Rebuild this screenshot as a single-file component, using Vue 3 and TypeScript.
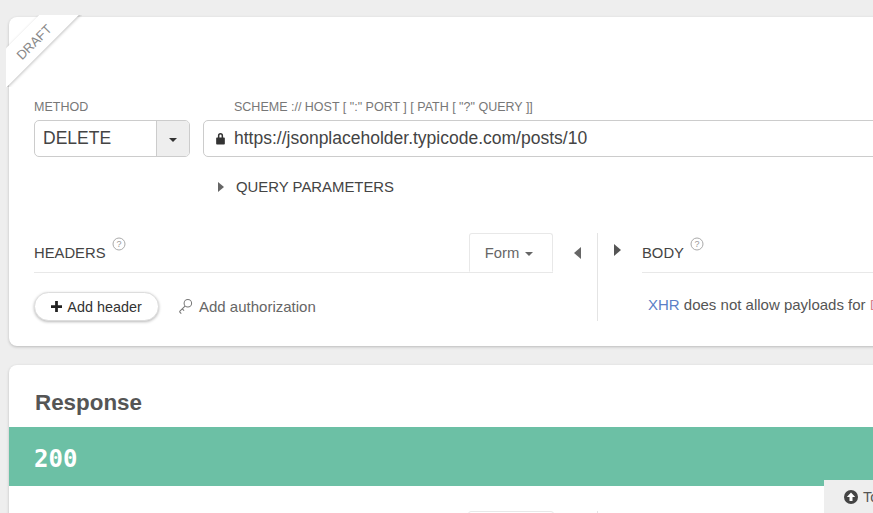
<script setup lang="ts">
const method = 'DELETE'
const url = 'https://jsonplaceholder.typicode.com/posts/10'
</script>

<template>
  <div class="page">
    <section class="card request">
      <div class="ribbon"><span>DRAFT</span></div>
      <div class="url-row">
        <div class="method">
          <label>METHOD</label>
          <div class="select">
            <span class="select-value">{{ method }}</span>
            <span class="select-btn"><i class="caret"></i></span>
          </div>
        </div>
        <div class="address">
          <label>SCHEME :// HOST [ ":" PORT ] [ PATH [ "?" QUERY ]]</label>
          <div class="url-input">
            <svg class="lock" viewBox="0 0 10 12" width="11" height="13"><path fill="#333" d="M2.600 5V3.400a2.400 2.400 0 0 1 4.800 0V5h.9c.4 0 .7.3.7.7v5.100c0 .4-.3.7-.7.7H1.700c-.4 0-.7-.3-.7-.7V5.700c0-.4.3-.7.7-.7zm1.400 0h2V3.400a1 1 0 0 0-2 0z"/></svg>
            <span>{{ url }}</span>
          </div>
        </div>
      </div>
      <div class="query"><i class="tri right"></i><span>QUERY PARAMETERS</span></div>
      <div class="panes">
        <div class="pane headers">
          <div class="pane-head">
            <span class="title">HEADERS</span>
            <svg class="help" viewBox="0 0 14 14" width="14" height="14"><circle cx="7" cy="7" r="6" fill="none" stroke="#aaa"/><text x="7" y="10.200" text-anchor="middle" font-size="9" font-family="Liberation Sans" fill="#999">?</text></svg>
            <div class="tab">Form<i class="caret grey"></i></div>
          </div>
          <div class="actions">
            <button class="add">
              <svg viewBox="0 0 12 12" width="11" height="11"><path fill="#222" d="M4.500 0h3v4.500H12v3H7.500V12h-3V7.500H0v-3h4.500z"/></svg>
              Add header
            </button>
            <span class="auth">
              <svg viewBox="0 0 16 18" width="15" height="17"><g fill="none" stroke="#777" stroke-width="1.100"><circle cx="10.500" cy="5.500" r="4"/><path d="M7.500 8.500 1.500 14.500M1.500 14.500l2 2M4.500 11.500l2 2"/></g></svg>
              Add authorization
            </span>
          </div>
        </div>
        <div class="arrows"><i class="tri left"></i></div>
        <div class="pane body-pane">
          <i class="tri right dark body-arrow"></i>
          <div class="body-col">
            <div class="pane-head">
              <span class="title">BODY</span>
              <svg class="help" viewBox="0 0 14 14" width="14" height="14"><circle cx="7" cy="7" r="6" fill="none" stroke="#aaa"/><text x="7" y="10.200" text-anchor="middle" font-size="9" font-family="Liberation Sans" fill="#999">?</text></svg>
            </div>
            <p class="note"><a>XHR</a> does not allow payloads for <code>DELETE</code> requests.</p>
          </div>
        </div>
      </div>
    </section>

    <section class="card response">
      <h2>Response</h2>
      <div class="status">200</div>
      <div class="resp-tools">
        <div class="resp-tab"></div>
        <div class="resp-rule"></div>
      </div>
    </section>

    <div class="top-btn">
      <svg viewBox="0 0 14 14" width="14" height="14"><circle cx="7" cy="7" r="7" fill="#444"/><path fill="#fff" d="M7 2.600 11.200 7H8.500v4h-3V7H2.800z"/></svg>
      <span>Top</span>
    </div>
  </div>
</template>

<style>
html, body { margin: 0; background: #eee; overflow: hidden; }
</style>

<style scoped>
.page {
  width: 873px;
  height: 513px;
  box-sizing: border-box;
  padding: 17px 0 0 9px;
  background: #eee;
  overflow: hidden;
  position: relative;
  font-family: "Liberation Sans", Arial, sans-serif;
  color: #333;
}
.card {
  width: 1100px;
  background: #fff;
  border-radius: 8px;
  box-shadow: 0 1px 3px rgba(0, 0, 0, .22);
  position: relative;
}
.request { height: 329px; box-sizing: border-box; padding: 83px 0 0 25px; }
.response { margin-top: 19px; height: 200px; }
.ribbon {
  position: absolute;
  left: -3px;
  top: -2px;
  width: 76px;
  height: 72px;
  overflow: hidden;
  pointer-events: none;
}
.ribbon span {
  position: absolute;
  left: -28px;
  top: 12px;
  width: 110px;
  height: 28px;
  line-height: 31px;
  text-align: center;
  transform: rotate(-45deg);
  background: #fff;
  box-shadow: 0 1px 3px rgba(0, 0, 0, .25);
  font-size: 13px;
  color: #888;
}
label { display: block; font-size: 12.500px; line-height: 14px; color: #777; height: 20px; }
.url-row { display: flex; gap: 13px; }
.method { width: 156px; }
.select {
  display: flex;
  height: 37px;
  box-sizing: border-box;
  border: 1px solid #ccc;
  border-radius: 5px;
  overflow: hidden;
}
.select-value { flex: 1; padding-left: 8px; font-size: 17.500px; line-height: 35px; color: #444; }
.select-btn {
  width: 32px;
  background: #eee;
  border-left: 1px solid #ccc;
  display: flex;
  align-items: center;
  justify-content: center;
}
.caret {
  display: inline-block;
  border-left: 4px solid transparent;
  border-right: 4px solid transparent;
  border-top: 4px solid #333;
  margin-top: 2px;
}
.caret.grey { border-top-color: #666; margin-left: 6px; vertical-align: 2px; }
.address { flex: 1; }
.address label { padding-left: 31px; }
.url-input {
  height: 37px;
  box-sizing: border-box;
  border: 1px solid #ccc;
  border-radius: 5px;
  display: flex;
  align-items: center;
  padding-left: 11px;
  gap: 8px;
  font-size: 17.500px;
  color: #444;
}
.lock { flex: none; }
.query {
  display: flex;
  align-items: center;
  margin: 20px 0 0 184px;
  font-size: 14.900px;
  line-height: 20px;
  color: #444;
  gap: 12px;
}
.tri { display: inline-block; border-top: 6px solid transparent; border-bottom: 6px solid transparent; }
.tri.right { border-left: 7px solid #666; }
.tri.left { border-right: 7px solid #666; }
.tri.dark { border-left-color: #555; }
.query .tri { border-top-width: 5px; border-bottom-width: 5px; border-left-width: 6px; }
.panes { display: flex; margin-top: 36px; align-items: stretch; height: 88px; }
.headers { width: 519px; }
.pane-head {
  display: flex;
  height: 39px;
  border-bottom: 1px solid #e8e8e8;
  position: relative;
}
.title { font-size: 14.800px; color: #444; margin-top: 12px; line-height: 16px; }
.help { margin: 4px 0 0 6px; }
.tab {
  margin-left: auto;
  width: 84px;
  height: 39px;
  box-sizing: border-box;
  border: 1px solid #e8e8e8;
  border-bottom-color: #fff;
  border-radius: 3px 3px 0 0;
  text-align: center;
  font-size: 14.800px;
  line-height: 38px;
  color: #666;
  padding-right: 4px;
}
.actions { display: flex; align-items: center; margin-top: 19px; gap: 19px; }
.add {
  width: 125px;
  height: 29px;
  padding: 0;
  border: 1px solid #ddd;
  border-radius: 15px;
  background: #fff;
  box-shadow: 0 1px 3px rgba(0, 0, 0, .28);
  font: 14.400px "Liberation Sans", Arial, sans-serif;
  color: #333;
  display: flex;
  align-items: center;
  justify-content: center;
  gap: 5px;
}
.auth { display: flex; align-items: center; gap: 6px; font-size: 15px; color: #666; }
.arrows { width: 45px; border-right: 1px solid #e4e4e4; padding-top: 12px; padding-left: 21px; box-sizing: border-box; }
.body-pane { flex: 1; display: flex; }
.body-arrow { margin: 11px 0 0 16px; align-self: flex-start; }
.body-col { flex: 1; margin-left: 21px; }
.note { margin: 23px 0 0 6px; font-size: 15px; color: #555; white-space: nowrap; }
.note a { color: #5b7fc7; }
.note code { font-family: "Liberation Sans", sans-serif; font-size: 15px; color: #d9828f; }
h2 { margin: 0; padding: 25px 0 0 26px; font-size: 22.400px; line-height: 25px; color: #555; }
.status {
  margin-top: 12px;
  height: 59px;
  box-sizing: border-box;
  background: #6cc0a5;
  color: #fff;
  padding-left: 25px;
  font: bold 24px/64px "DejaVu Sans Mono", monospace;
}
.resp-tools { position: relative; height: 20px; }
.resp-tab {
  position: absolute;
  left: 459px;
  top: 25px;
  width: 84px;
  height: 10px;
  border: 1px solid #e8e8e8;
  border-radius: 3px;
}
.resp-rule { position: absolute; left: 588px; top: 25px; width: 1px; height: 10px; background: #e4e4e4; }
.top-btn {
  position: absolute;
  left: 824px;
  top: 480px;
  width: 100px;
  height: 40px;
  background: #eee;
  display: flex;
  align-items: center;
  gap: 5px;
  padding-left: 20px;
  box-sizing: border-box;
  font-size: 14.500px;
  color: #555;
  padding-bottom: 7px;
}
.top-btn svg { flex: none; }
</style>
